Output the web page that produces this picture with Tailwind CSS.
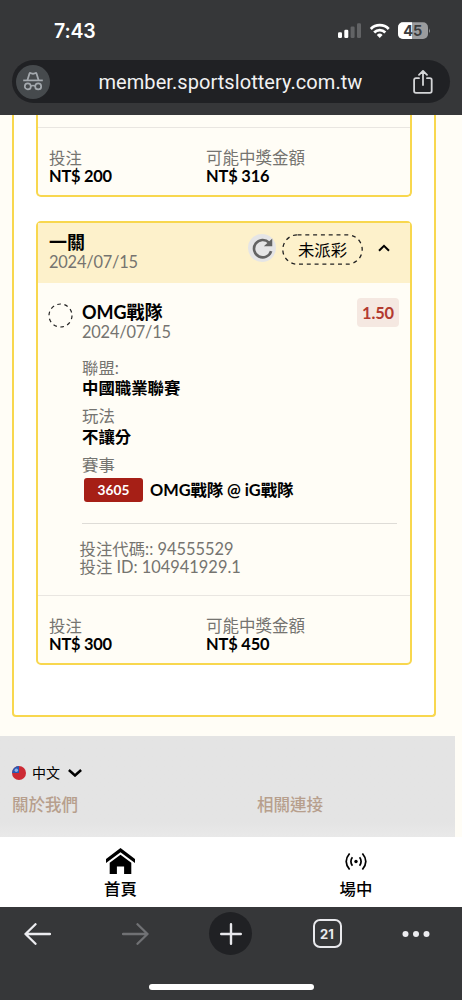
<!DOCTYPE html>
<html lang="zh-Hant">
<head>
<meta charset="utf-8">
<meta name="viewport" content="width=device-width, initial-scale=1">
<title>運彩投注紀錄</title>
<script src="https://cdn.jsdelivr.net/npm/@tailwindcss/browser@4"></script>
</head>
<body class="w-[462px] h-[1000px] overflow-hidden flex flex-col bg-[#fffdf6] font-[Lato,'Noto_Sans_CJK_TC',sans-serif] text-[16.4px] leading-[18px] text-black whitespace-nowrap">

<header class="h-[115px] shrink-0 bg-[#363739] font-[Inter,sans-serif] px-3">
  <div class="h-[60px] flex items-center justify-between pl-[42px] pr-[19px] pt-[2px]">
    <span class="text-[19.5px] font-semibold text-white leading-6 tracking-[-0.2px]">7:43</span>
    <svg class="w-[94px] h-[18px]" viewBox="337 22 94 18">
      <rect x="338" y="32.2" width="4" height="5.8" rx="1.2" fill="#fff"/>
      <rect x="344.3" y="29.7" width="4" height="8.3" rx="1.2" fill="#fff"/>
      <rect x="350.6" y="26.5" width="4" height="11.5" rx="1.2" fill="#626365"/>
      <rect x="357" y="23.3" width="4" height="14.7" rx="1.2" fill="#626365"/>
      <g fill="none" stroke="#fff" stroke-width="2.8"><path d="M370.8 28.9a12.6 12.6 0 0 1 17.9 0"/><path d="M374.2 32.5a7.9 7.9 0 0 1 11.1 0"/></g>
      <path d="M379.7 38l-2.9-3a4.1 4.1 0 0 1 5.8 0z" fill="#fff"/>
      <clipPath id="batt"><rect x="398" y="22.3" width="30" height="16.7" rx="5"/></clipPath>
      <g clip-path="url(#batt)"><rect x="398" y="22" width="30" height="18" fill="#9b9c9e"/><rect x="398" y="22" width="14" height="18" fill="#fff"/></g>
      <path d="M429 28.2q1.8 2.4 0 5z" fill="#9b9c9e"/>
      <text x="412.8" y="36" text-anchor="middle" font-family="Inter" font-size="14.5" font-weight="700" fill="#3b3c3e">45</text>
    </svg>
  </div>
  <div class="h-[43px] rounded-full bg-[#202124] flex items-center pl-1 pr-[17px]">
    <div class="size-[34px] rounded-full bg-[#464a4d] flex items-center justify-center">
      <svg class="w-5 h-[19px]" viewBox="0 0 20 19" fill="none" stroke="#a4a9ae">
        <path d="M.2 8.4h19.6" stroke-width="1.7"/>
        <path d="M4.4 8.2 6.5 1.6q.3-.8 1.1-.5l2.4.7 2.4-.7q.8-.3 1.1.5l2.1 6.6" stroke-width="1.8"/>
        <circle cx="4.8" cy="14.4" r="3" stroke-width="1.7"/><circle cx="15.2" cy="14.4" r="3" stroke-width="1.7"/>
        <path d="M7.8 14q2.2-1.2 4.4 0" stroke-width="1.5"/>
      </svg>
    </div>
    <span class="ml-[48.5px] text-[20px] tracking-[0.06px] leading-6 text-[#f1f1f2] font-[Roboto,sans-serif]">member.sportslottery.com.tw</span>
    <svg class="w-5 h-6 ml-auto" viewBox="0 0 20 24" fill="none" stroke="#d4d5d7" stroke-width="1.8" stroke-linecap="round" stroke-linejoin="round">
      <path d="M6 8.2H3q-1.9 0-1.9 1.9V21q0 1.900 1.900 1.900h13.800q1.900 0 1.900-1.900V10.100q0-1.900-1.900-1.900H14M10 15V1M6 4.800 10 .9l4 3.900"/>
    </svg>
  </div>
</header>

<main class="h-[621px] shrink-0 pl-3">
  <div class="w-[424px] h-[602px] bg-white border-2 border-t-0 border-[#f8d74e] rounded-b-[4px] px-[22px]">

    <section class="h-[82px] bg-[#fffdf6] border-2 border-t-0 border-[#f8d74e] rounded-b-[5px]">
      <div class="h-[13px] border-b border-[#e9e6e1]"></div>
      <div class="flex pl-[11px] pt-[21px]">
        <div class="w-[157px]">
          <div class="h-[18px] text-[#757470]">投注</div>
          <div class="h-[18px] font-bold tracking-[-0.25px]">NT$ 200</div>
        </div>
        <div>
          <div class="h-[18px] text-[16.5px] text-[#757470]">可能中獎金額</div>
          <div class="h-[18px] font-bold tracking-[-0.15px]">NT$ 316</div>
        </div>
      </div>
    </section>

    <section class="mt-6 h-[444px] bg-[#fffdf6] border-2 border-[#f8d74e] rounded-[5px]">
      <div class="h-[60px] bg-[#fdf1cb] flex justify-between pl-[11px] pr-[20px]">
        <div class="pt-[10px]">
          <div class="h-[20px] text-[18px] font-bold">一關</div>
          <div class="h-[18px] tracking-[-0.2px] text-[#757470]">2024/07/15</div>
        </div>
        <div class="flex items-center h-[52px]">
          <div class="mb-[2px] size-7 rounded-full bg-[#e5e5e6] flex items-center justify-center">
            <svg class="size-[21px]" viewBox="0 0 20 20" fill="none"><path d="M16.200 4.400A8.300 8.300 0 1 0 18.200 12.500" stroke="#636363" stroke-width="2.500"/><path d="M19.300 .4v7.400h-8z" fill="#636363"/></svg>
          </div>
          <div class="relative ml-[6px] w-[81px] h-[31px] flex items-center justify-center">
            <svg class="absolute inset-0" width="81" height="31"><rect x=".8" y=".8" width="79.400" height="29.400" rx="14.700" fill="none" stroke="#222" stroke-width="1.300" stroke-dasharray="4 3.800"/></svg>
            <span class="mt-[1px]">未派彩</span>
          </div>
          <svg class="ml-[15px] mb-[2px] w-3 h-2" viewBox="0 0 12 8" fill="none" stroke="#000" stroke-width="2"><path d="M1 6.800 6 1.800l5 5"/></svg>
        </div>
      </div>

      <div class="h-[313px] border-b border-[#e9e6e1] flex pl-[10px] pr-[11px]">
        <svg class="mt-[20px] size-[25px] shrink-0" viewBox="0 0 25 25"><circle cx="12.500" cy="12.500" r="11.500" fill="none" stroke="#222" stroke-width="1.200" stroke-dasharray="3.700 3.525"/></svg>
        <div class="ml-[9px] grow pt-[20px]">
          <div class="flex justify-between h-[38px]">
            <div>
              <div class="h-[20px] text-[18px] font-bold">OMG戰隊</div>
              <div class="h-[18px] tracking-[-0.2px] text-[#757470]">2024/07/15</div>
            </div>
            <div class="-mt-[5px] w-[42px] h-[29px] rounded-[4px] bg-[#f5e8e1] text-[#b23a2f] font-bold tracking-[-0.1px] flex items-center justify-center">1.50</div>
          </div>
          <div class="mt-[18px] h-[20px] text-[#757470]">聯盟:</div>
          <div class="h-[18px] font-bold">中國職業聯賽</div>
          <div class="mt-[10px] h-[21px] text-[#757470]">玩法</div>
          <div class="h-[18px] font-bold">不讓分</div>
          <div class="mt-[10px] h-[18px] text-[#757470]">賽事</div>
          <div class="mt-[4px] h-[24px] flex items-center">
            <div class="ml-[2px] w-[59px] h-[24px] rounded-[3px] bg-[#a61f16] text-white text-[13.700px] font-bold flex items-center justify-center">3605</div>
            <div class="ml-[7px] h-[18px] font-bold tracking-[-0.05px]">OMG戰隊 @ iG戰隊</div>
          </div>
          <div class="mt-[21px] w-[315px] h-px bg-[#dedcd7]"></div>
          <div class="mt-[16px] -ml-[2.500px] text-[#757470]">
            <div class="h-[18px]">投注代碼:: 94555529</div>
            <div class="h-[18px]">投注 ID: 104941929.1</div>
          </div>
        </div>
      </div>

      <div class="flex pl-[11px] pt-[21px]">
        <div class="w-[157px]">
          <div class="h-[18px] text-[#757470]">投注</div>
          <div class="h-[18px] font-bold tracking-[-0.25px]">NT$ 300</div>
        </div>
        <div>
          <div class="h-[18px] text-[16.5px] text-[#757470]">可能中獎金額</div>
          <div class="h-[18px] font-bold tracking-[-0.15px]">NT$ 450</div>
        </div>
      </div>
    </section>
  </div>
</main>

<footer class="h-[101px] shrink-0 w-[455px] bg-[#e4e4e4] bg-linear-to-b from-[#e4e4e4] from-85% to-[#e9e9e9] px-3 pt-7">
  <div class="flex items-center h-[18px] text-[14px]">
    <svg class="size-[14px]" viewBox="0 0 14 14"><clipPath id="flag"><circle cx="7" cy="7" r="7"/></clipPath><g clip-path="url(#flag)"><path d="M0 0h14v14H0z" fill="#cc2a34"/><path d="M0 0h7v7H0z" fill="#2858b4"/><circle cx="4.300" cy="4.200" r="1.700" fill="#91afe4"/></g></svg>
    <span class="ml-[6px]">中文</span>
    <svg class="ml-2 w-[14px] h-2" viewBox="0 0 14 8" fill="none" stroke="#000" stroke-width="2.500"><path d="M.9 1 7 6.500 13.100 1"/></svg>
  </div>
  <div class="mt-[14px] flex font-medium text-[16.5px] text-[#b79f8d]"><span class="w-[245px]">關於我們</span><span>相關連接</span></div>
</footer>

<nav class="h-[70px] shrink-0 bg-white flex font-medium">
  <div class="w-[241px] flex flex-col items-center pt-[11px]">
    <svg class="w-[29px] h-[26px]" viewBox="0 0 29 26"><path d="M14.500 0 29 11v4L14.500 4.200 0 15v-4z"/><path d="M14.500 6.700 25.300 14.800V26h-7.200v-7.500h-7.200V26H3.700V14.800z"/></svg>
    <span class="mt-[6px] h-[18px]">首頁</span>
  </div>
  <div class="w-[221px] pl-[9px] flex flex-col items-center pt-[16px]">
    <svg class="w-[22px] h-[17px]" viewBox="0 0 22 17" fill="none" stroke="#000" stroke-width="1.700"><circle cx="11" cy="8.500" r="1.700" fill="#000" stroke="none"/><path d="M7.400 4.300q-3 4.200 0 8.400M14.600 4.300q3 4.200 0 8.400M4.600.5q-6.800 8 0 16M17.400.5q6.800 8 0 16"/></svg>
    <span class="mt-[10px] h-[18px]">場中</span>
  </div>
</nav>

<div class="h-[93px] shrink-0 bg-[#363739] flex flex-col items-center pt-[5px]">
  <div class="w-full h-[43px] flex items-center justify-between pl-6 pr-[32px]">
    <svg class="w-[27px] h-[22px]" viewBox="0 0 27 22" fill="none" stroke="#ececf0" stroke-width="2.300" stroke-linecap="round" stroke-linejoin="round"><path d="M26 11H1.500M11.500 1.200 1.500 11l10 9.800"/></svg>
    <svg class="ml-[10px] w-[27px] h-[22px]" viewBox="0 0 27 22" fill="none" stroke="#707174" stroke-width="2.300" stroke-linecap="round" stroke-linejoin="round"><path d="M1 11h24.500M15.500 1.200l10 9.800-10 9.800"/></svg>
    <div class="size-[43px] rounded-full bg-[#202124] flex items-center justify-center">
      <svg class="size-[22px]" viewBox="0 0 22 22" stroke="#e8e8ec" stroke-width="2.400" stroke-linecap="round"><path d="M11 1.200v19.600M1.200 11h19.600"/></svg>
    </div>
    <div class="size-[29px] rounded-[7px] border-2 border-[#e9e9ed] text-[#e9e9ed] font-[Inter,sans-serif] font-bold text-[13px] flex items-center justify-center">21</div>
    <svg class="w-[28px] h-[6px]" viewBox="0 0 28 6" fill="#ececf0"><circle cx="3.500" cy="3" r="3"/><circle cx="14" cy="3" r="3"/><circle cx="24.500" cy="3" r="3"/></svg>
  </div>
  <div class="mt-[29px] w-[165px] h-[6px] rounded-full bg-white"></div>
</div>
</body>
</html>
